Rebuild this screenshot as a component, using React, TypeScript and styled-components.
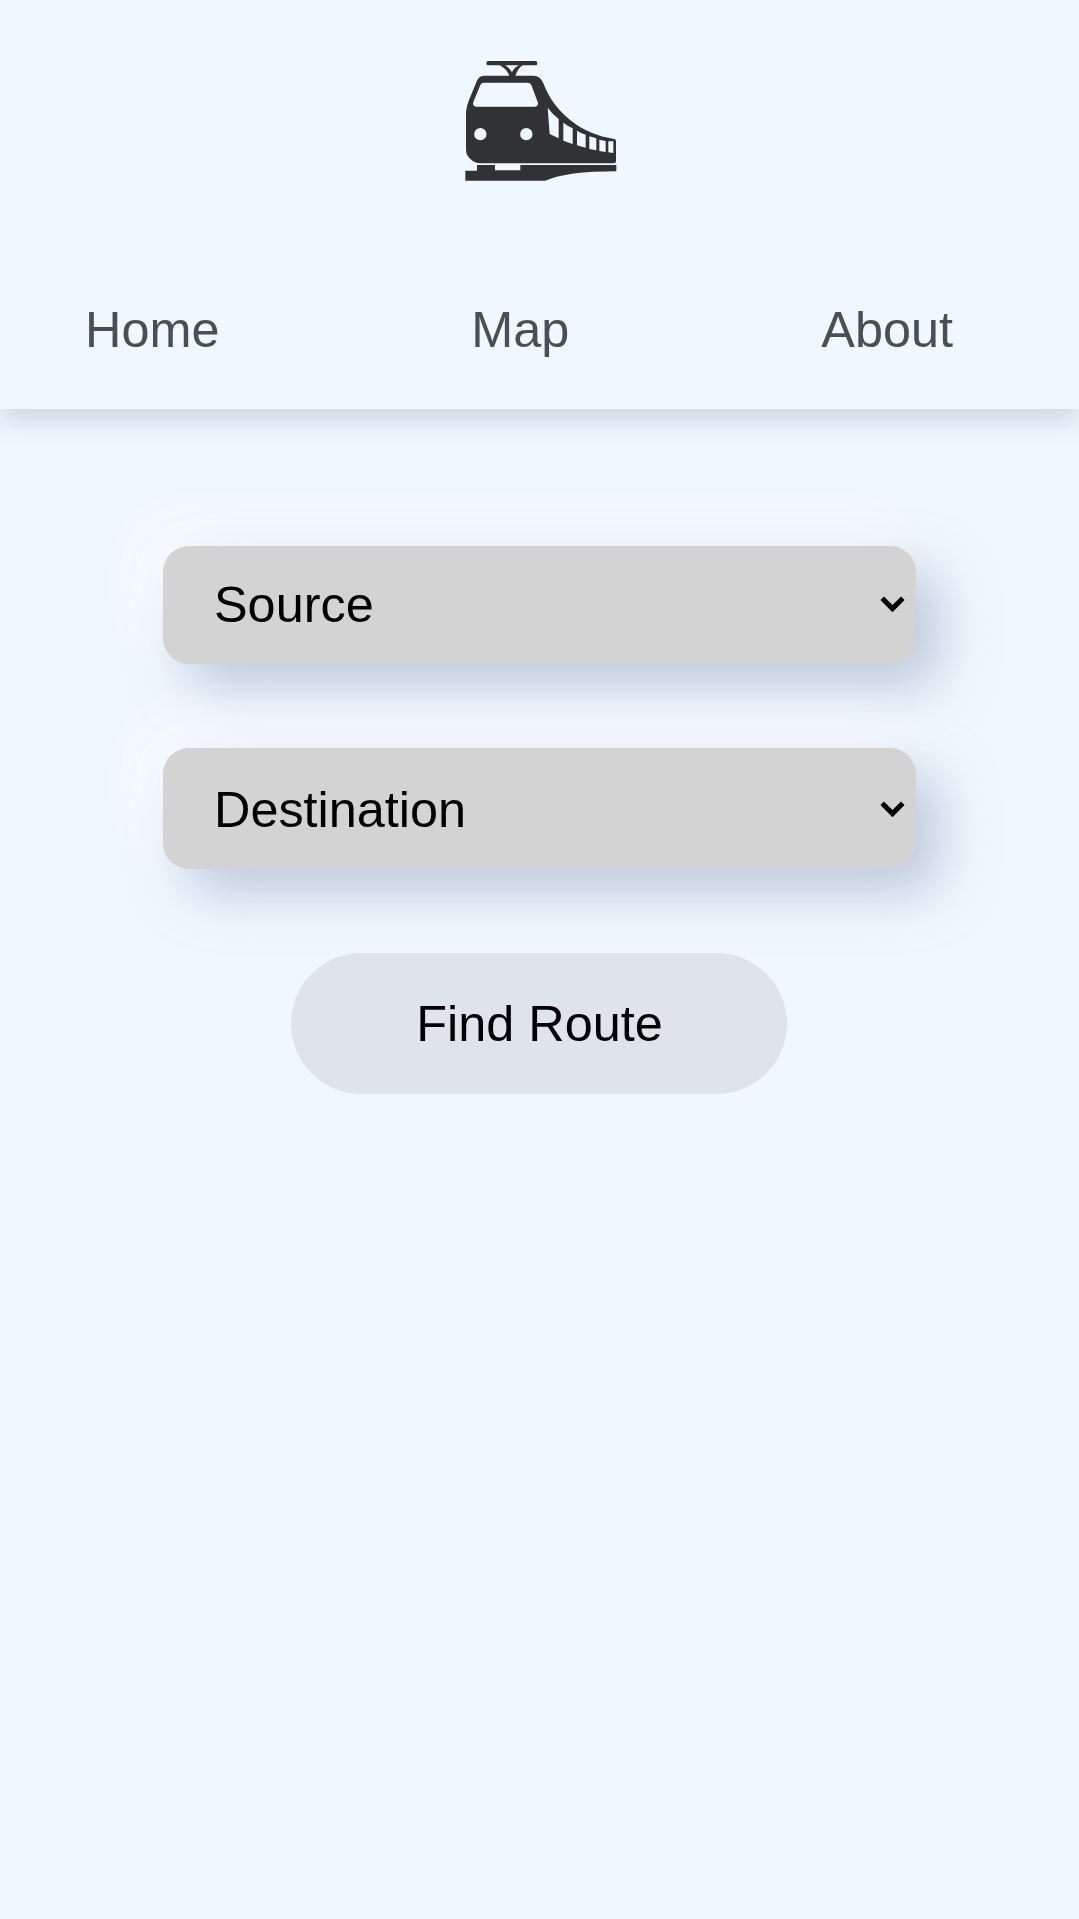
import React from "react";
import styled, { createGlobalStyle } from "styled-components";

const GlobalStyle = createGlobalStyle`
  * { box-sizing: border-box; }
  body {
    margin: 0;
    background: #f0f8ff;
    font-family: "Liberation Sans", Arial, sans-serif;
  }
`;

const Page = styled.div`
  min-height: 1919px;
  background: #f0f8ff;
  overflow: hidden;
`;

const Header = styled.header`
  height: 409px;
  padding-top: 50px;
  display: flex;
  flex-direction: column;
  align-items: center;
  box-shadow: 0 10.5px 26px rgba(163, 177, 198, 0.48);
`;

const Logo = styled.svg`
  display: block;
  width: 180px;
  height: 140px;
`;

const Nav = styled.nav`
  width: 100%;
  margin-top: 111px;
  padding: 0 126px 0 85px;
  display: flex;
  justify-content: space-between;
`;

const NavLink = styled.a`
  color: #4b4f52;
  font-size: 50.4px;
  line-height: 58px;
  text-decoration: none;
`;

const Form = styled.form`
  padding-top: 137px;
  display: flex;
  flex-direction: column;
  align-items: center;
`;

const Select = styled.button<{ $height: number; $top?: number; $bottom?: number }>`
  width: 753px;
  height: ${(p) => p.$height}px;
  margin-bottom: 84px;
  padding: ${(p) => p.$top ?? 0}px 11px ${(p) => p.$bottom ?? 0}px 51px;
  display: flex;
  align-items: center;
  justify-content: space-between;
  border: 0;
  border-radius: 26px;
  background: #d3d3d3;
  color: #000;
  font: 50.4px "Liberation Sans", Arial, sans-serif;
  box-shadow:
    23.6px 23.6px 52.5px rgba(163, 177, 198, 0.64),
    -23.6px -23.6px 52.5px rgba(255, 255, 255, 0.55);
`;

const Chevron = styled.svg`
  width: 25px;
  height: 17px;
`;

const Submit = styled.button`
  width: 496px;
  height: 141px;
  margin-right: 1px;
  padding: 0 0 1px 1px;
  border: 0;
  border-radius: 71px;
  background: #dfe3ea;
  color: #000;
  font: 50.4px "Liberation Sans", Arial, sans-serif;
`;

const TrainLogo = () => (
  <Logo viewBox="0 0 540 420" fill="#303234" aria-label="Train">
    <path d="M115 33H256Q262 33 262 39.500T256 46H218Q203 55 196 78H178Q170 56 149 46H115Q109 46 109 39.500T115 33ZM165 46Q178 53 186 67Q192 53 207 46Z" />
    <path
      fillRule="evenodd"
      d="M102 77H250Q272 78 280 100C314 190 395 253 493 267Q498 268 498 274V334Q498 340 492 340H92Q64 338 51 314Q48 306 48 294V186Q49 170 57 150L79 97Q85 78 102 77ZM101 98Q94 98 91 105L70 156Q66 170 80 170H253Q267 170 263 156L244 105Q241 98 232 98ZM91 234A18.500 18.500 0 1 0 91 271A18.500 18.500 0 1 0 91 234ZM229 234A18.500 18.500 0 1 0 229 271A18.500 18.500 0 1 0 229 234ZM293 173Q307 192 326 207V265L299 252ZM340 218Q353 228 368 235V282L340 272ZM381 242Q393 250 407 254V293L381 286ZM418 259L439 265V301L418 297ZM448 269L467 273V306L448 303ZM475 274H490V309L475 307Z"
    />
    <path d="M81 345H135V361H211V345H499V364Q350 364 286 392H46V362H81Z" />
  </Logo>
);

const Arrow = () => (
  <Chevron viewBox="0 0 25 17" fill="none" stroke="#000" strokeWidth="5">
    <path d="M2.200 2.200L12.500 12.600L22.800 2.200" />
  </Chevron>
);

export default function App() {
  return (
    <Page>
      <GlobalStyle />
      <Header>
        <TrainLogo />
        <Nav>
          <NavLink>Home</NavLink>
          <NavLink>Map</NavLink>
          <NavLink>About</NavLink>
        </Nav>
      </Header>
      <Form>
        <Select type="button" $height={118} $bottom={1}>
          Source
          <Arrow />
        </Select>
        <Select type="button" $height={121} $top={2}>
          Destination
          <Arrow />
        </Select>
        <Submit type="button">Find Route</Submit>
      </Form>
    </Page>
  );
}
